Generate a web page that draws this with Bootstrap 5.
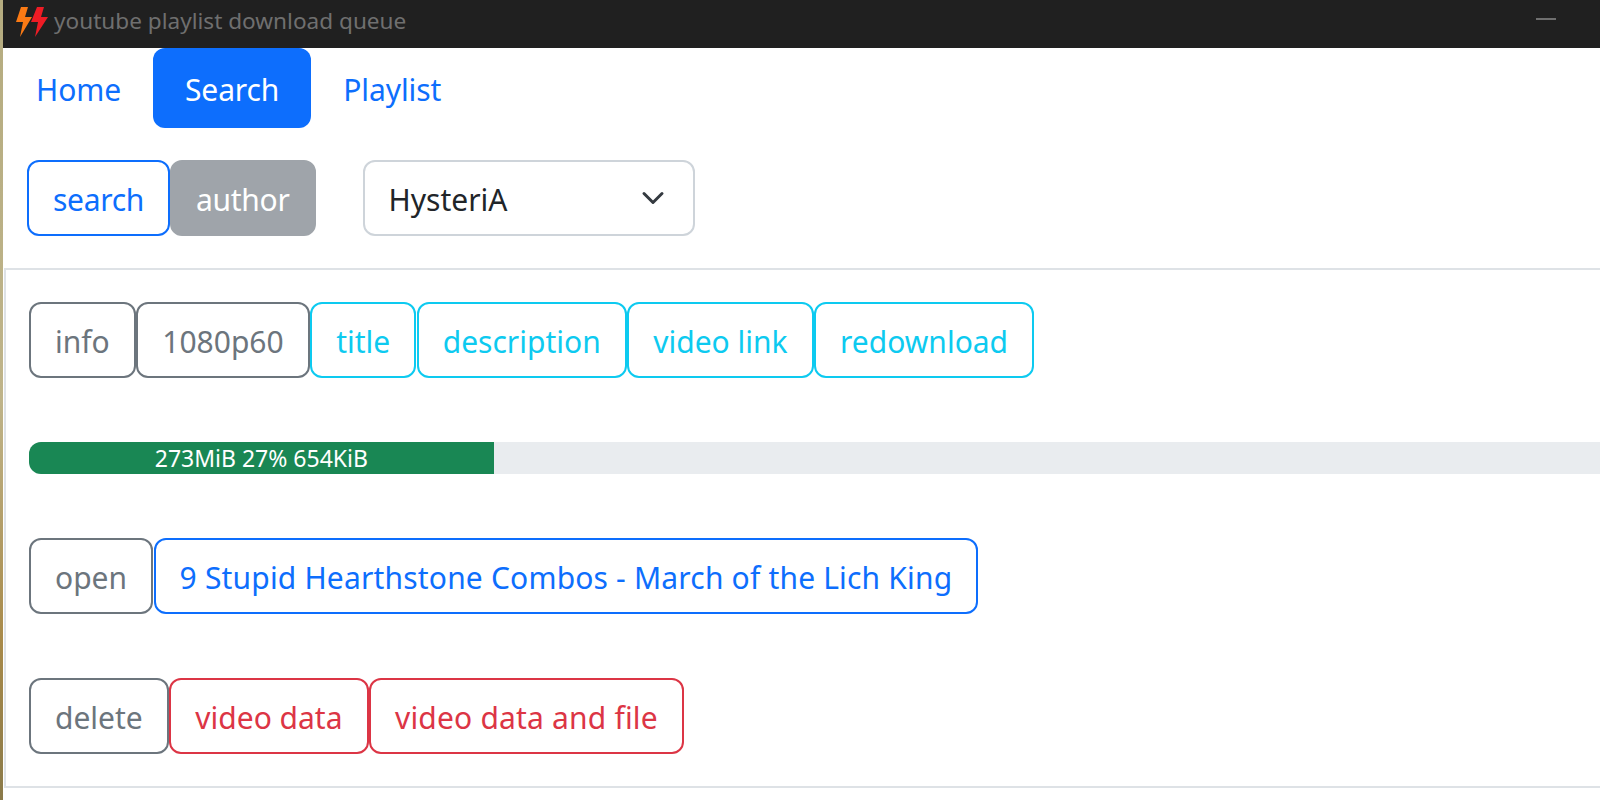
<!DOCTYPE html>
<html lang="en">
<head>
<meta charset="utf-8">
<title>youtube playlist download queue</title>
<link href="https://cdn.jsdelivr.net/npm/bootstrap@5.3.0/dist/css/bootstrap.min.css" rel="stylesheet">
<style>
html { font-size: 32px; }
html, body { height: 800px; overflow: hidden; }
body {
  font-family: "Noto Sans", sans-serif;
  font-size: 30px;
  line-height: 48px;
  padding-left: 3px;
  background: linear-gradient(180deg, #b5ac80 0%, #bfb48a 50%, #a88a4a 80%, #8a7a4a 100%);
  --bs-border-width: 2px;
}
.app-frame { width: 1771px; height: 800px; background: #fff; }
.title-strip { height: 48px; background: #202020; color: #6f6f6f; font-size: 22.6px; line-height: 40px; padding-bottom: 6px; }
.title-strip svg { width: 36px; height: 36px; margin-left: 10px; flex: none; margin-top: 2px; }
.title-label { margin-left: 5px; }
.win-min { width: 20px; height: 2px; background: #6f6f6f; position: absolute; left: 1533px; top: 18px; }
.pills-row { padding-left: 1px; }
.pills-row .nav-link { font-size: 30px; line-height: 48px; letter-spacing: -.1px; padding-top: 18px; padding-bottom: 14px; }
.tool-btn { --bs-btn-font-size: 30px; --bs-btn-line-height: 48px; --bs-btn-border-width: 2px; --bs-btn-padding-y: 12px; padding-top: 14px; padding-bottom: 10px; }
.tight-label { letter-spacing: -.3px; }
.wide-label { letter-spacing: .18px; }
.search-row { padding-left: 24px; }
.search-row .btn-line { gap: 0; }
.choice-select { width: 332px; font-size: 30px; line-height: 48px; margin-left: 47px; padding-top: 14px; padding-bottom: 10px; border-color: #ced4da; background-size: 32px 24px; background-position: right 24px center; }
.result-box { margin-left: 1px; border-left: 2px solid #dee2e6; border-top: 2px solid #dee2e6; border-bottom: 2px solid #dee2e6; height: 520px; padding: 32px 24px 32px 23px; row-gap: 64px; }
.btn-line { gap: .5px; }
.load-bar { font-size: 23px; }
.load-bar .progress-bar { line-height: 32px; }
</style>
</head>
<body>
<div class="app-frame position-relative">
  <div class="title-strip d-flex align-items-center">
    <svg viewBox="0 0 36 36" aria-hidden="true">
      <polygon fill="#fb7a14" points="8,3 15,3 12,13 19,13 7,33 10,18 3,18"/>
      <polygon fill="#ee1c25" points="24,3 31,3 28,13 35,13 22,33 25,18 18,18"/>
    </svg>
    <span class="title-label">youtube playlist download queue</span>
    <div class="win-min"></div>
  </div>
  <ul class="nav nav-pills pills-row">
    <li class="nav-item"><a class="nav-link" href="#">Home</a></li>
    <li class="nav-item"><a class="nav-link active" href="#">Search</a></li>
    <li class="nav-item"><a class="nav-link" href="#">Playlist</a></li>
  </ul>
  <div class="search-row d-flex align-items-center my-3">
    <div class="d-flex btn-line">
      <button class="btn btn-outline-primary tool-btn tight-label">search</button>
      <button class="btn btn-secondary tool-btn tight-label" disabled>author</button>
    </div>
    <select class="form-select choice-select"><option>HysteriA</option></select>
  </div>
  <div class="result-box d-flex flex-column">
    <div class="d-flex btn-line">
      <button class="btn btn-outline-secondary tool-btn">info</button>
      <button class="btn btn-outline-secondary tool-btn">1080p60</button>
      <button class="btn btn-outline-info tool-btn">title</button>
      <button class="btn btn-outline-info tool-btn">description</button>
      <button class="btn btn-outline-info tool-btn">video link</button>
      <button class="btn btn-outline-info tool-btn">redownload</button>
    </div>
    <div class="progress load-bar">
      <div class="progress-bar bg-success" style="width: 27%">273MiB 27% 654KiB</div>
    </div>
    <div class="d-flex btn-line">
      <button class="btn btn-outline-secondary tool-btn">open</button>
      <button class="btn btn-outline-primary tool-btn wide-label">9 Stupid Hearthstone Combos - March of the Lich King</button>
    </div>
    <div class="d-flex btn-line">
      <button class="btn btn-outline-secondary tool-btn">delete</button>
      <button class="btn btn-outline-danger tool-btn">video data</button>
      <button class="btn btn-outline-danger tool-btn wide-label">video data and file</button>
    </div>
  </div>
</div>
<script src="https://cdn.jsdelivr.net/npm/bootstrap@5.3.0/dist/js/bootstrap.bundle.min.js"></script>
</body>
</html>
